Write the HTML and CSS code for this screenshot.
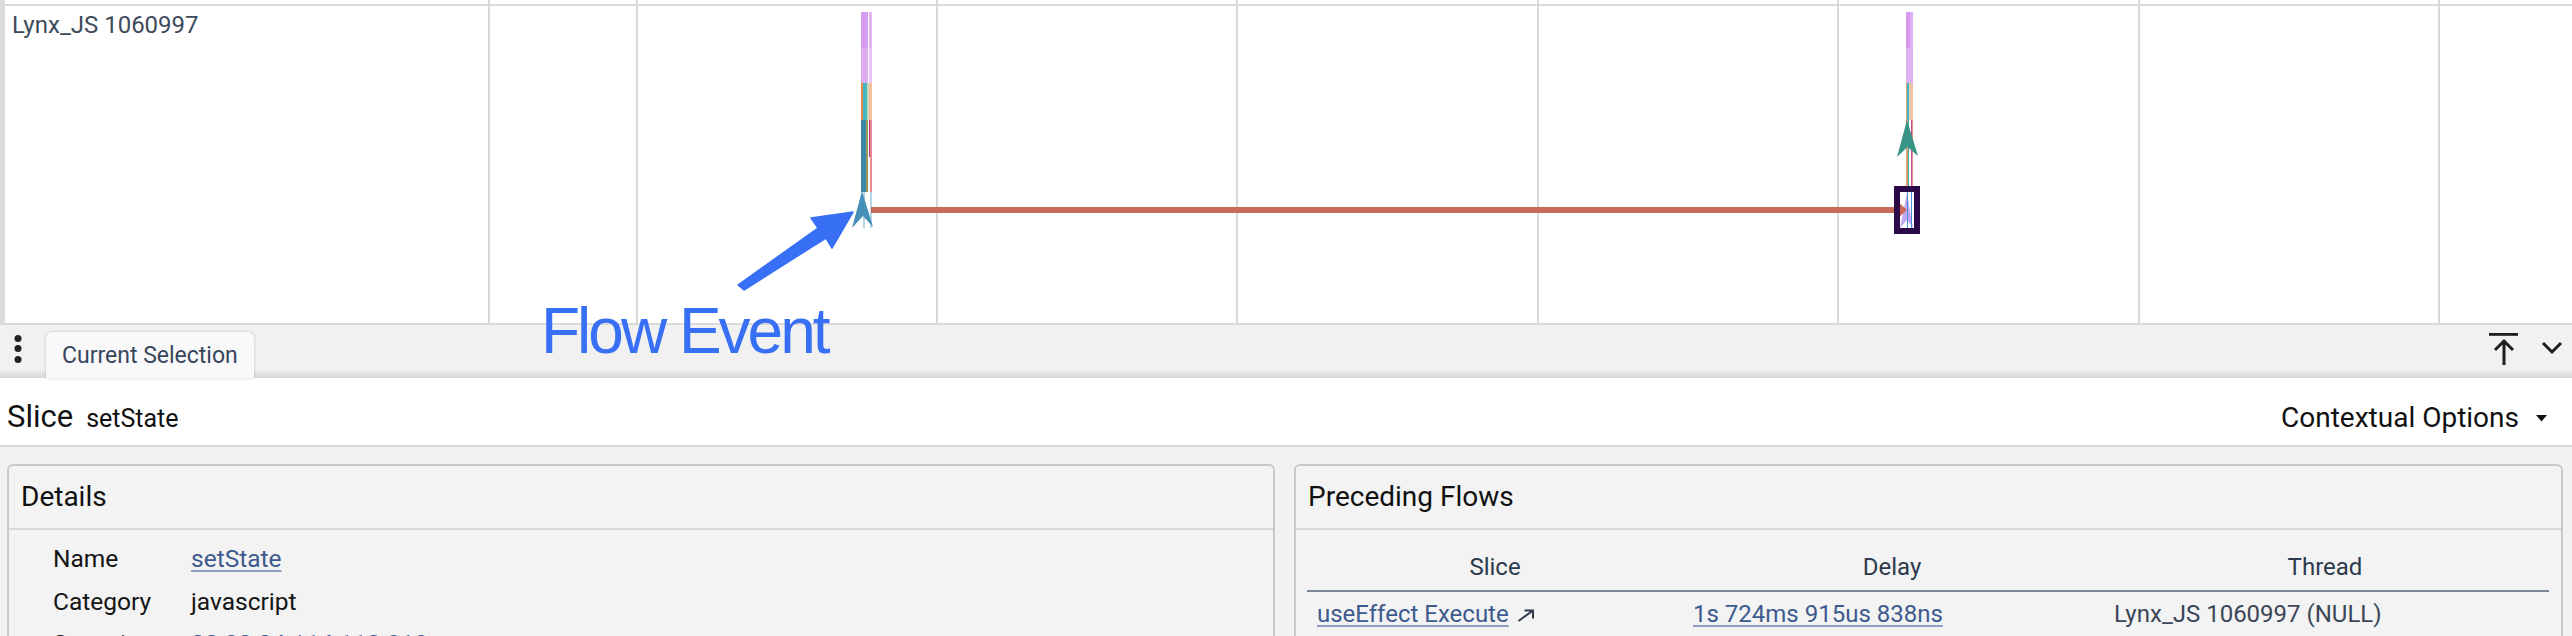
FILE: index.html
```html
<!DOCTYPE html>
<html lang="en">
<head>
<meta charset="utf-8">
<title>Perfetto - Current Selection</title>
<link rel="stylesheet" href="styles.css">
</head>
<body>
<div class="page">
  <div class="timeline">
    <div class="gutter"></div>
    <div class="tracks">
      <div class="track">
        <div class="track-shell"><span class="track-title">Lynx_JS 1060997</span></div>
        <div class="track-body"></div>
      </div>
    </div>
    <svg class="canvas" viewBox="0 0 2572 325" width="2572" height="325" aria-hidden="true">
      <g stroke="#d8d8d8" stroke-width="2">
        <line x1="489" y1="0" x2="489" y2="325"/>
        <line x1="637" y1="0" x2="637" y2="325"/>
        <line x1="937" y1="0" x2="937" y2="325"/>
        <line x1="1237" y1="0" x2="1237" y2="325"/>
        <line x1="1538" y1="0" x2="1538" y2="325"/>
        <line x1="1838" y1="0" x2="1838" y2="325"/>
        <line x1="2139" y1="0" x2="2139" y2="325"/>
        <line x1="2439" y1="0" x2="2439" y2="325"/>
      </g>
      <!-- first slice stack -->
      <g shape-rendering="crispEdges">
        <rect x="861" y="12" width="7" height="36" fill="#d79cf0"/>
        <rect x="869" y="12" width="2.5" height="36" fill="#e4b4f6"/>
        <rect x="861" y="48" width="7" height="35" fill="#dcaef0"/>
        <rect x="869" y="48" width="2.5" height="35" fill="#e8c4f8"/>
        <rect x="861" y="83" width="2" height="37" fill="#e08c50"/>
        <rect x="863" y="83" width="4" height="37" fill="#45b5c2"/>
        <rect x="867" y="83" width="1.5" height="37" fill="#c8d8b0"/>
        <rect x="869" y="83" width="2.5" height="37" fill="#f2c09c"/>
        <rect x="861" y="120" width="5" height="72" fill="#3f87a8"/>
        <rect x="866" y="120" width="1.5" height="72" fill="#9a9a60"/>
        <rect x="869" y="120" width="1.2" height="37" fill="#b8307c"/>
        <rect x="870.2" y="120" width="1.3" height="72" fill="#e9899a"/>
      </g>
      <line x1="864" y1="192" x2="864" y2="228" stroke="#4a98c8" stroke-width="0.8"/>
      <line x1="871" y1="192" x2="871" y2="228" stroke="#4a98c8" stroke-width="0.8"/>
      <polygon points="862,191 873,227 863,216 852,228" fill="#4590b8"/>
      <!-- flow line -->
      <rect x="871" y="207" width="1027" height="6" fill="#c96a58"/>
      <!-- second slice stack -->
      <g shape-rendering="crispEdges">
        <rect x="1906" y="12" width="3.5" height="36" fill="#d79cf0"/>
        <rect x="1910" y="12" width="2.5" height="36" fill="#e2b0f4"/>
        <rect x="1906" y="48" width="6.5" height="35" fill="#dcb2f0"/>
        <rect x="1906" y="83" width="1.2" height="37" fill="#e0a070"/>
        <rect x="1907.2" y="83" width="2" height="37" fill="#46b6c6"/>
        <rect x="1909.2" y="83" width="1" height="37" fill="#e6d0b0"/>
        <rect x="1910.2" y="83" width="2.3" height="37" fill="#f3c2a2"/>
        <rect x="1906" y="120" width="1.5" height="66" fill="#d9a070"/>
        <rect x="1907.5" y="120" width="1.2" height="66" fill="#4aa8b4"/>
        <rect x="1910.5" y="120" width="1" height="66" fill="#c45088"/>
        <rect x="1911.5" y="120" width="1" height="66" fill="#ec9090"/>
      </g>
      <polygon points="1907,120 1918,156 1907.5,147 1897,157" fill="#379487"/>
      <rect x="1900" y="192" width="14" height="36" fill="#ffffff"/>
      <polygon points="1907,193 1913,228 1907,220 1900,228" fill="#c3a6f4"/>
      <line x1="1907.5" y1="192" x2="1907.5" y2="228" stroke="#4a8fd8" stroke-width="1"/>
      <line x1="1911.5" y1="192" x2="1911.5" y2="228" stroke="#4a8fd8" stroke-width="1"/>
      <polygon points="1896,200 1907,210 1896,220 1899,210" fill="#c96a58"/>
      <rect x="1897" y="189" width="20" height="42" fill="none" stroke="#2c0a47" stroke-width="6"/>
      <!-- annotation arrow -->
      <polygon points="738,285 818,228 811,218 853,212 832,248 826,238 744,290" fill="#376ff5" stroke="#376ff5" stroke-width="1.5" stroke-linejoin="round"/>
    </svg>
  </div>

  <div class="tabbar">
    <svg class="kebab" viewBox="0 0 10 30" width="10" height="30" aria-hidden="true">
      <circle cx="5" cy="4.5" r="3.5"/>
      <circle cx="5" cy="14.5" r="3.5"/>
      <circle cx="5" cy="25.5" r="3.5"/>
    </svg>
    <div class="tab">Current Selection</div>
    <div class="tab-spacer"></div>
    <svg class="tab-actions" viewBox="0 0 80 40" width="80" height="40" aria-hidden="true">
      <rect x="3" y="3" width="29" height="2.8" fill="#1f1f1f"/>
      <path d="M18 11 V35 M9 20 L18 11 L27 20" fill="none" stroke="#1f1f1f" stroke-width="3"/>
      <path d="M57 13 L66 22 L75 13" fill="none" stroke="#1f1f1f" stroke-width="3"/>
    </svg>
  </div>

  <div class="slice-header">
    <h1 class="slice-title">Slice<span class="slice-name">setState</span></h1>
    <div class="ctx-options">Contextual Options<svg class="caret" viewBox="0 0 11 7" width="11" height="7" aria-hidden="true"><path d="M0 0 H11 L5.5 6.5 Z"/></svg></div>
  </div>

  <div class="cards">
    <section class="card">
      <div class="card-head">Details</div>
      <div class="kv">
        <div class="k">Name</div><div class="v"><a class="link" href="#">setState</a></div>
        <div class="k">Category</div><div class="v">javascript</div>
        <div class="k">Start time</div><div class="v"><a class="link" href="#">00:00:04.114 112 313</a></div>
      </div>
    </section>
    <section class="card">
      <div class="card-head">Preceding Flows</div>
      <table class="flows">
        <colgroup><col class="c1"><col class="c2"><col class="c3"></colgroup>
        <thead>
          <tr><th>Slice</th><th>Delay</th><th>Thread</th></tr>
        </thead>
        <tbody>
          <tr>
            <td class="td1"><a class="link" href="#">useEffect Execute</a><svg class="call-made" viewBox="0 0 18 13" width="18" height="13" aria-hidden="true"><path d="M1.5 12 L16 1.5 M7.5 1.5 H16 V9.5" fill="none" stroke="#2f3b4d" stroke-width="2"/></svg></td>
            <td class="td2"><a class="link" href="#">1s 724ms 915us 838ns</a></td>
            <td class="td3">Lynx_JS 1060997 (NULL)</td>
          </tr>
        </tbody>
      </table>
    </section>
  </div>

  <div class="annotation">Flow Event</div>
</div>
</body>
</html>
```

FILE: styles.css
```css
html, body {
  margin: 0;
  padding: 0;
  background: #f2f2f2;
}

.page {
  position: relative;
  width: 2572px;
  height: 636px;
  overflow: hidden;
  font-family: Roboto, "Liberation Sans", sans-serif;
  color: #111;
}

/* ---------- timeline ---------- */
.timeline {
  position: relative;
  height: 325px;
  display: flex;
  background: #fff;
}

.gutter {
  width: 5px;
  background: #dcdcdc;
}

.tracks {
  flex: 1;
  padding-top: 4px;
}

.track {
  height: 321px;
  box-sizing: border-box;
  border-top: 2px solid #dadada;
  border-bottom: 2px solid #dadada;
  display: flex;
}

.track-shell {
  width: 484px;
  padding: 5px 0 0 7px;
  box-sizing: border-box;
}

.track-title {
  font-size: 24px;
  color: #3d4a5c;
}

.track-body {
  flex: 1;
}

.canvas {
  position: absolute;
  left: 0;
  top: 0;
  pointer-events: none;
}

/* ---------- tab bar ---------- */
.tabbar {
  height: 53px;
  display: flex;
  align-items: flex-end;
  background: linear-gradient(to bottom, #f1f1f1 0, #f1f1f1 44px, #d7d7d7 53px);
}

.kebab {
  align-self: flex-start;
  margin: 9px 0 0 13px;
  fill: #222;
}

.tab {
  margin-left: 23px;
  width: 208px;
  box-sizing: border-box;
  height: 46px;
  padding: 10px 0 0 16px;
  font-size: 23px;
  line-height: 27px;
  color: #37465a;
  background: #f9f9f9;
  border-radius: 6px 6px 0 0;
  box-shadow: 0 0 3px rgba(0, 0, 0, 0.22);
}

.tab-spacer {
  flex: 1;
}

.tab-actions {
  align-self: flex-start;
  margin: 5px 6px 0 0;
}

/* ---------- slice header ---------- */
.slice-header {
  height: 67px;
  box-sizing: content-box;
  padding: 0 25px 0 7px;
  display: flex;
  align-items: baseline;
  justify-content: space-between;
  background: #fff;
  border-bottom: 2px solid #d6d6d6;
}

.slice-title {
  margin: 20px 0 0;
  font-size: 31px;
  font-weight: 400;
  color: #111;
}

.slice-name {
  margin-left: 13px;
  font-size: 25px;
}

.ctx-options {
  font-size: 28px;
  color: #111;
}

.caret {
  margin-left: 17px;
  vertical-align: 0.18em;
  fill: #111;
}

/* ---------- cards ---------- */
.cards {
  height: 189px;
  box-sizing: border-box;
  padding: 17px 9px 0 7px;
  display: grid;
  grid-template-columns: 1fr 1fr;
  column-gap: 19px;
  background: #f2f2f2;
  overflow: hidden;
}

.card {
  border: 2px solid #c9c9c9;
  border-radius: 6px;
  background: #f3f3f3;
}

.card-head {
  height: 62px;
  padding: 0 12px;
  line-height: 62px;
  font-size: 28px;
  color: #111;
  border-bottom: 2px solid #d8d8d8;
}

.kv {
  display: grid;
  grid-template-columns: 138px 1fr;
  padding: 8px 0 0 44px;
  font-size: 24.5px;
  line-height: 42.5px;
  color: #151515;
}

.link {
  color: #3d5a8e;
  text-decoration: underline;
  text-decoration-color: #8d9dc6;
  text-decoration-thickness: 2px;
  text-underline-offset: 3px;
}

.flows {
  margin: 22px 12px 0 11px;
  width: 1242px;
  table-layout: fixed;
  border-collapse: collapse;
  font-size: 24px;
  line-height: 30px;
}

.flows .c1 { width: 376px; }
.flows .c2 { width: 418px; }
.flows .c3 { width: 448px; }

.flows th {
  padding: 0 0 8px;
  font-weight: 400;
  text-align: center;
  color: #2d3a4d;
  border-bottom: 2px solid #7b8796;
}

.flows td {
  padding: 7px 0 0;
  white-space: nowrap;
  color: #3b4656;
}

.flows .td1 { padding-left: 10px; }
.flows .td2 { padding-left: 10px; }
.flows .td3 { padding-left: 13px; }

.call-made {
  margin-left: 8px;
  vertical-align: 0;
}

/* ---------- annotation ---------- */
.annotation {
  position: absolute;
  left: 541px;
  top: 299px;
  font-family: "Liberation Sans", Arial, sans-serif;
  font-size: 64px;
  line-height: 64px;
  letter-spacing: -3px;
  color: #376ff5;
  white-space: nowrap;
}
```
